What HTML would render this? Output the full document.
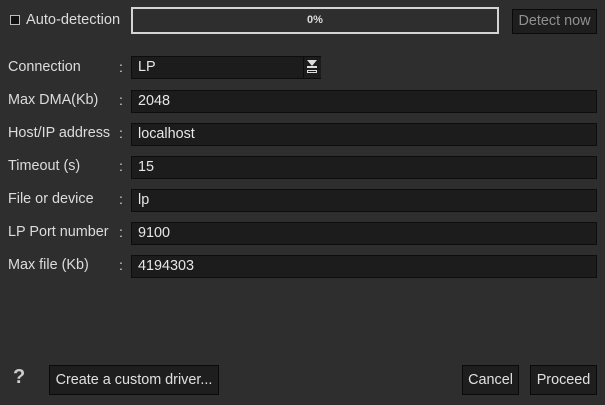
<!DOCTYPE html>
<html><head><style>
body{margin:0;width:605px;height:405px;background:#2e2e2e;font-family:"Liberation Sans",sans-serif;color:#dcdcdc;position:relative;overflow:hidden}
.a{position:absolute}
.lbl{position:absolute;left:8px;font-size:14.4px;line-height:22px}
.col{position:absolute;left:119px;font-size:14px;line-height:22px}
.f{position:absolute;left:131px;background:#1c1c1c;border:1px solid #0d0d0d;font-size:14.4px;line-height:21px;padding-left:6px;box-sizing:border-box;width:466px;height:23px;color:#e6e6e6}
.btn{position:absolute;background:#1e1e1e;border:1px solid #0a0a0a;font-size:14.4px;text-align:center;box-sizing:border-box;color:#e0e0e0;white-space:nowrap}
</style></head><body>
<div class="a" style="left:10px;top:15px;width:8px;height:8px;border:1px solid #bbb;background:#111"></div>
<div class="a" style="left:26px;top:11px;font-size:14.6px;line-height:18px">Auto-detection</div>
<div class="a" style="left:131px;top:7px;width:364px;height:23px;border:2px solid #d4d4d4;text-align:center;font-size:11px;font-weight:bold;line-height:23px">0%</div>
<div class="btn" style="left:512px;top:9px;width:85px;height:25px;line-height:23px;color:#909090">Detect now</div>

<div class="lbl" style="top:56px">Connection</div><div class="col" style="top:56px">:</div>
<div class="f" style="top:56px;width:190px">LP</div>
<div class="a" style="left:303px;top:57px;width:17px;height:21px;border-left:1px solid #0d0d0d;background:#1c1c1c">
<div class="a" style="left:3px;top:3px;width:0;height:0;border-left:5px solid transparent;border-right:5px solid transparent;border-top:6px solid #ddd"></div>
<div class="a" style="left:3px;top:9px;width:10px;height:2px;background:#ddd"></div>
<div class="a" style="left:3px;top:13px;width:10px;height:3px;border:1px solid #ddd;box-sizing:border-box"></div>
</div>

<div class="lbl" style="top:89px">Max DMA(Kb)</div><div class="col" style="top:89px">:</div><div class="f" style="top:90px">2048</div>
<div class="lbl" style="top:122px">Host/IP address</div><div class="col" style="top:122px">:</div><div class="f" style="top:123px">localhost</div>
<div class="lbl" style="top:155px">Timeout (s)</div><div class="col" style="top:155px">:</div><div class="f" style="top:156px">15</div>
<div class="lbl" style="top:188px">File or device</div><div class="col" style="top:188px">:</div><div class="f" style="top:189px">lp</div>
<div class="lbl" style="top:221px">LP Port number</div><div class="col" style="top:221px">:</div><div class="f" style="top:222px">9100</div>
<div class="lbl" style="top:254px">Max file (Kb)</div><div class="col" style="top:254px">:</div><div class="f" style="top:255px">4194303</div>

<div class="a" style="left:13px;top:366px;font-size:20px;font-weight:bold;color:#ccc">?</div>
<div class="btn" style="left:49px;top:365px;width:170px;height:30px;line-height:28px">Create a custom driver...</div>
<div class="btn" style="left:462px;top:365px;width:57px;height:30px;line-height:28px">Cancel</div>
<div class="btn" style="left:530px;top:365px;width:67px;height:30px;line-height:28px">Proceed</div>
</body></html>
